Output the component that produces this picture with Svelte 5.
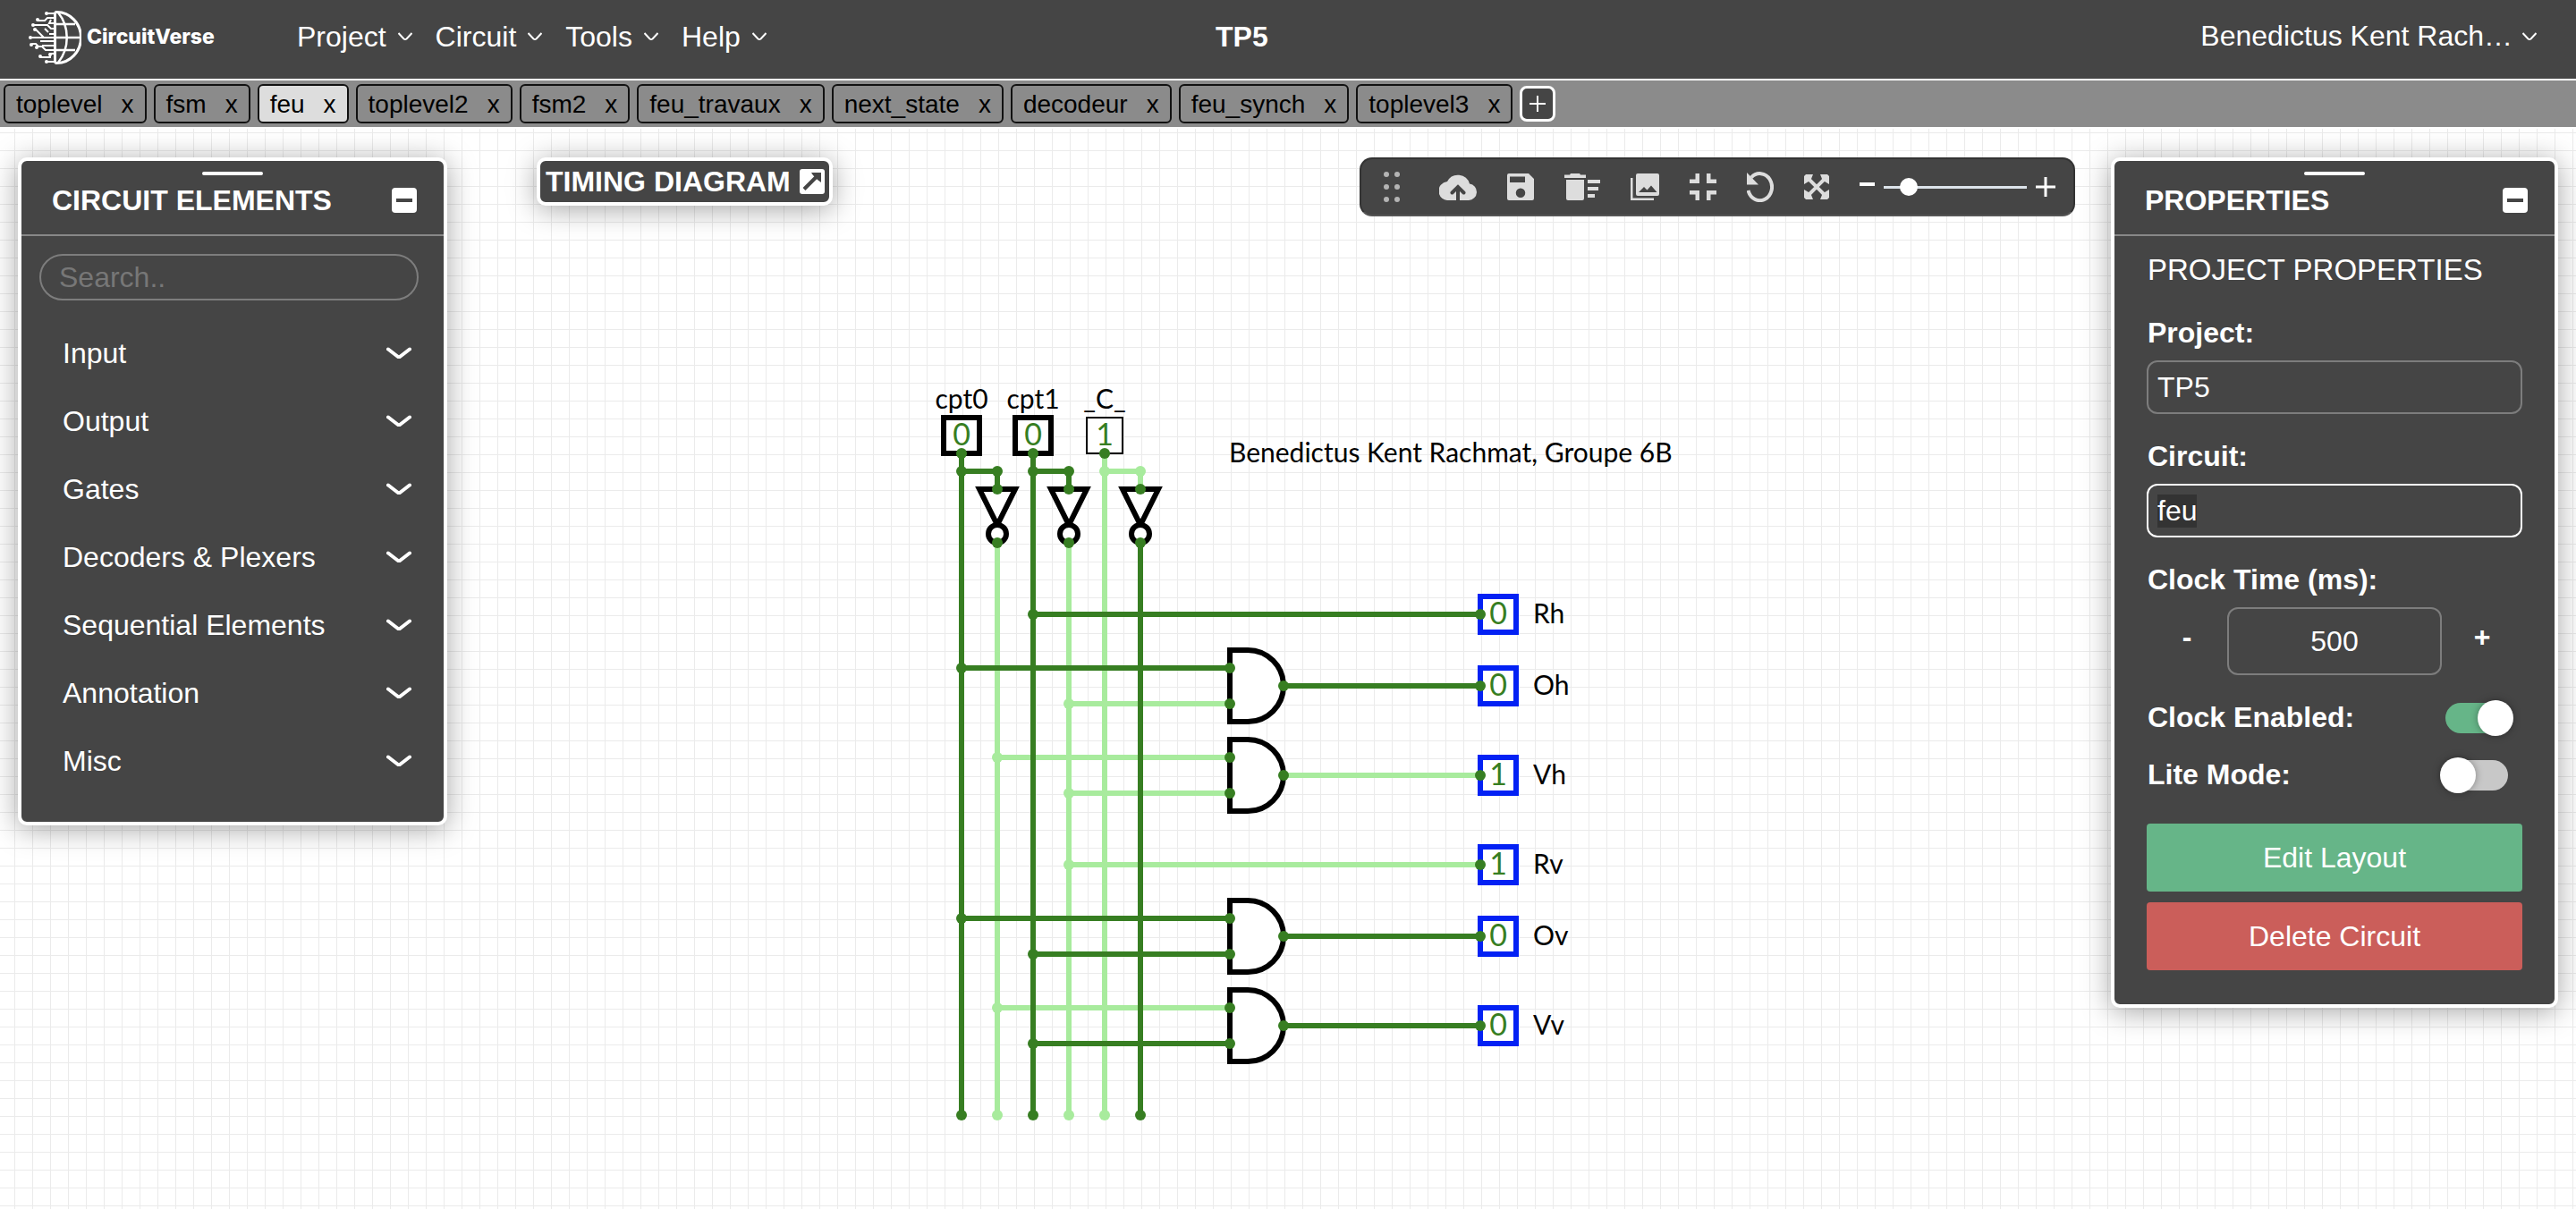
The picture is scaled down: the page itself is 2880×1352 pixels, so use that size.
<script>
  import { onMount } from 'svelte';

  const menus = ['Project', 'Circuit', 'Tools', 'Help'];
  const tabs = ['toplevel', 'fsm', 'feu', 'toplevel2', 'fsm2', 'feu_travaux', 'next_state', 'decodeur', 'feu_synch', 'toplevel3'];
  const groups = ['Input', 'Output', 'Gates', 'Decoders & Plexers', 'Sequential Elements', 'Annotation', 'Misc'];

  let activeTab = $state('feu');
  let project = $state('TP5');
  let circuit = $state('feu');
  let clockTime = $state(500);
  let clockEnabled = $state(true);
  let liteMode = $state(false);
  let zoom = $state(13);
  let circuitInput;

  onMount(() => {
    circuitInput.focus();
    circuitInput.select();
  });

  // Wires: [x1, y1, x2, y2, value]
  const wires = [
    [1235, 507, 1235, 1247, 1], [1235, 527, 1275, 527, 1], [1275, 527, 1275, 547, 1],
    [1115, 607, 1115, 1247, 1], [1195, 607, 1195, 1247, 1],
    [1195, 787, 1375, 787, 1], [1115, 847, 1375, 847, 1], [1195, 887, 1375, 887, 1],
    [1435, 867, 1655, 867, 1], [1195, 967, 1655, 967, 1], [1115, 1127, 1375, 1127, 1],
    [1075, 507, 1075, 1247, 0], [1075, 527, 1115, 527, 0], [1115, 527, 1115, 547, 0],
    [1155, 507, 1155, 1247, 0], [1155, 527, 1195, 527, 0], [1195, 527, 1195, 547, 0],
    [1275, 607, 1275, 1247, 0], [1155, 687, 1655, 687, 0], [1075, 747, 1375, 747, 0],
    [1435, 767, 1655, 767, 0], [1075, 1027, 1375, 1027, 0], [1155, 1067, 1375, 1067, 0],
    [1435, 1047, 1655, 1047, 0], [1155, 1167, 1375, 1167, 0], [1435, 1147, 1655, 1147, 0]
  ];
  const joints = [
    [1075, 527, 0], [1115, 527, 0], [1155, 527, 0], [1195, 527, 0], [1235, 527, 1], [1275, 527, 1],
    [1155, 687, 0], [1075, 747, 0], [1195, 787, 1], [1115, 847, 1], [1195, 887, 1], [1195, 967, 1],
    [1075, 1027, 0], [1155, 1067, 0], [1115, 1127, 1], [1155, 1167, 0],
    [1075, 1247, 0], [1115, 1247, 1], [1155, 1247, 0], [1195, 1247, 1], [1235, 1247, 1], [1275, 1247, 0]
  ];
  const inputs = [
    { x: 1075, label: 'cpt0', value: 0, bold: true },
    { x: 1155, label: 'cpt1', value: 0, bold: true },
    { x: 1235, label: '_C_', value: 1, bold: false }
  ];
  const inverters = [1115, 1195, 1275];
  const andGates = [767, 867, 1047, 1147];
  const outputs = [
    { y: 687, label: 'Rh', value: 0 }, { y: 767, label: 'Oh', value: 0 }, { y: 867, label: 'Vh', value: 1 },
    { y: 967, label: 'Rv', value: 1 }, { y: 1047, label: 'Ov', value: 0 }, { y: 1147, label: 'Vv', value: 0 }
  ];
</script>

{#snippet caret()}
  <svg class="caret" width="16" height="10" viewBox="0 0 16 10" aria-hidden="true"><path d="M0.5 1l6 6.5q1.5 1 3 0L15.500 1" /></svg>
{/snippet}

<div class="app">
  <header class="nav">
    <div class="nav-left">
      <a class="logo" href="#home" aria-label="CircuitVerse">
        <svg width="59" height="60" viewBox="0 0 59 60" aria-hidden="true">
          <g fill="none" stroke="#fff" stroke-width="3">
            <path d="M29.500 1.500v57M29.500 1.500h2a27 28.500 0 0 1 0 57h-2" />
            <path d="M33 2c13 16 13 40 0 56M30 15h22M30 30h28M30 44h22" stroke-width="2.500" />
            <path d="M29 3h-8M29 8h-8l-3 3h-8M29 14h-6l2-4M29 20h-4l-4-4H6M29 26h-6M29 30H2M29 34h-16M29 39h-14M29 44h-10l-4-4h-4l-3-3H4M29 48h-5v4H12M29 57h-8M17 30l-9-9M22 24l-4-4" stroke-width="2" />
          </g>
          <g fill="#fff">
            <circle cx="20" cy="3" r="2" /><circle cx="10" cy="10" r="2" /><circle cx="5" cy="16" r="2" /><circle cx="7" cy="21" r="2" />
            <circle cx="2" cy="30" r="2" /><circle cx="3" cy="38" r="2" /><circle cx="9" cy="41" r="2" /><circle cx="13" cy="51" r="2" /><circle cx="20" cy="57" r="2" /><circle cx="24" cy="49" r="2" />
          </g>
        </svg>
        <span>CircuitVerse</span>
      </a>
      <nav class="menus">
        {#each menus as menu}
          <button type="button">{menu}{@render caret()}</button>
        {/each}
      </nav>
    </div>
    <h1>TP5</h1>
    <button type="button" class="user"><span>Benedictus Kent Rach…</span>{@render caret()}</button>
  </header>

  <div class="tabs">
    {#each tabs as tab}
      <div class="tab" class:active={tab === activeTab}>
        <button type="button" onclick={() => (activeTab = tab)}>{tab}</button>
        <button type="button" aria-label="Close {tab}">x</button>
      </div>
    {/each}
    <button type="button" class="add" aria-label="New circuit">
      <svg width="18" height="18" viewBox="0 0 18 18"><path d="M9 0v18M0 9h18" stroke="#fff" stroke-width="2" /></svg>
    </button>
  </div>

  <main class="workspace">
    <svg class="circuit" width="860" height="850" viewBox="1040 420 860 850" role="img" aria-label="Circuit feu">
      {#each inputs as pin}
        <rect class="pin" class:thin={!pin.bold} x={pin.x - 20} y="467" width="40" height="40" />
        <text class="label mid" x={pin.x} y="457">{pin.label}</text>
        <text class="value" x={pin.x} y="498">{pin.value}</text>
      {/each}
      {#each outputs as out}
        <rect class="pin out" x="1655" y={out.y - 20} width="40" height="40" />
        <text class="value" x="1675" y={out.y + 11}>{out.value}</text>
        <text class="label" x="1714" y={out.y + 10}>{out.label}</text>
      {/each}
      {#each inverters as x}
        <path class="gate" d="M{x - 20} 547h40L{x} 587z" />
        <circle class="gate" cx={x} cy="597" r="10" />
      {/each}
      {#each andGates as y}
        <path class="gate" d="M1375 {y - 40}h20a40 40 0 0 1 0 80h-20z" />
      {/each}
      {#each wires as [x1, y1, x2, y2, v]}
        <line class="wire" class:high={v} {x1} {y1} {x2} {y2} />
      {/each}
      {#each joints as [cx, cy, v]}
        <circle class="joint" class:high={v} {cx} {cy} r="6" />
      {/each}
      {#each inputs as pin}<circle class="joint" cx={pin.x} cy="507" r="6" />{/each}
      {#each outputs as out}<circle class="joint" cx="1655" cy={out.y} r="6" />{/each}
      {#each inverters as x}
        <circle class="joint" cx={x} cy="547" r="6" /><circle class="joint" cx={x} cy="607" r="6" />
      {/each}
      {#each andGates as y}
        <circle class="joint" cx="1375" cy={y - 20} r="6" /><circle class="joint" cx="1375" cy={y + 20} r="6" /><circle class="joint" cx="1435" cy={y} r="6" />
      {/each}
      <text class="label" x="1374" y="517">Benedictus Kent Rachmat, Groupe 6B</text>
    </svg>

    <section class="panel elements">
      <div class="panel-head">
        <span class="grip"></span>
        <h2>CIRCUIT ELEMENTS</h2>
        <button type="button" class="mini" aria-label="Minimize circuit elements"></button>
      </div>
      <input class="search" type="text" placeholder="Search.." aria-label="Search circuit elements" />
      <div class="groups">
        {#each groups as group}
          <button type="button">
            {group}
            <svg width="28" height="14" viewBox="0 0 28 14" aria-hidden="true"><path d="M2 2.500l11 8.500M15 11l11-8.500" /></svg>
          </button>
        {/each}
      </div>
    </section>

    <section class="panel timing">
      <h2>TIMING DIAGRAM</h2>
      <button type="button" aria-label="Open timing diagram">
        <svg width="28" height="28" viewBox="0 0 28 28"><rect width="28" height="28" rx="3" fill="#fff" /><path d="M5 22.500L21 6.500" stroke="#454545" stroke-width="4" /><path d="M13 4h11v11l-4-3-5-5z" fill="#454545" /></svg>
      </button>
    </section>

    <div class="toolbar" role="toolbar" aria-label="Quick actions">
      <svg class="dots" width="18" height="34" viewBox="0 0 18 34" aria-hidden="true">
        <g fill="#b4b4b4">
          <circle cx="3" cy="3" r="3" /><circle cx="15" cy="3" r="3" /><circle cx="3" cy="17" r="3" /><circle cx="15" cy="17" r="3" /><circle cx="3" cy="31" r="3" /><circle cx="15" cy="31" r="3" />
        </g>
      </svg>
      <button type="button" aria-label="Save online">
        <svg width="42" height="30" viewBox="0 0 42 30"><path fill="#ddd" d="M11 30A10.500 10.500 0 0 1 9 9a13.500 13.500 0 0 1 25 2.500A9.300 9.300 0 0 1 33 30z" /><path d="M21 30V15M14.500 21.500l6.500-6.500 6.500 6.500" fill="none" stroke="#454545" stroke-width="4" stroke-linecap="round" /></svg>
      </button>
      <button type="button" aria-label="Save offline">
        <svg width="30" height="30" viewBox="0 0 30 30"><path fill="#ddd" fill-rule="evenodd" d="M2 0h22l6 6v22a2 2 0 0 1-2 2H2a2 2 0 0 1-2-2V2a2 2 0 0 1 2-2zM3 3.500v6.500h17V3.500zM15 16.500a5 5 0 1 0 0 10.500 5 5 0 0 0 0-10.500z" /></svg>
      </button>
      <button type="button" aria-label="Delete selected">
        <svg width="40" height="30" viewBox="0 0 40 30"><path fill="#ddd" d="M7 0h10l1 1.500h6V5H0V1.500h6zM2 7h20v21a2 2 0 0 1-2 2H4a2 2 0 0 1-2-2zM26 7h14v4H26zM26 15h12v4H26zM26 23h8v4h-8z" /></svg>
      </button>
      <button type="button" aria-label="Download as image">
        <svg width="32" height="30" viewBox="0 0 32 30"><path fill="#ddd" d="M0 5h2.500v22.500H26V30H0zM8 0h22a2 2 0 0 1 2 2v21a2 2 0 0 1-2 2H8a2 2 0 0 1-2-2V2a2 2 0 0 1 2-2z" /><path fill="#454545" d="M9 21l6-6 3.500 3.500 4.500-5 6.500 7.500z" /></svg>
      </button>
      <button type="button" aria-label="Fit to screen">
        <svg width="30" height="30" viewBox="0 0 30 30"><path fill="#ddd" d="M6.500 0H11v11H0V6.500h6.500zM19 0h4.500v6.500H30V11H19zM0 19h11v11H6.500v-6.500H0zM19 19h11v4.500h-6.500V30H19z" /></svg>
      </button>
      <button type="button" aria-label="Undo">
        <svg width="30" height="34" viewBox="0 0 30 34"><path fill="none" stroke="#ddd" stroke-width="4" d="M1.500 21A13.500 15 0 1 0 5 6.500" /><path fill="#ddd" d="M0 1v13.500h13z" /></svg>
      </button>
      <button type="button" aria-label="View preview">
        <svg width="28" height="28" viewBox="0 0 28 28"><path stroke="#ddd" stroke-width="4" d="M4 4l20 20M24 4L4 24" /><path fill="#ddd" d="M2 0h8L8 5 5 8l-5 3V2zM26 0h-8l2 5 3 3 5 3V2zM0 26v-9l5 3 3 3 2 5H2zM28 26v-9l-5 3-3 3-2 5h8z" /></svg>
      </button>
      <div class="zoom">
        <button type="button" aria-label="Zoom out"><svg width="17" height="22" viewBox="0 0 17 22"><path d="M0 8h17" stroke="#fff" stroke-width="4" /></svg></button>
        <input type="range" min="0" max="100" bind:value={zoom} aria-label="Zoom" />
        <button type="button" aria-label="Zoom in"><svg width="22" height="22" viewBox="0 0 22 22"><path d="M11 0v22M0 11h22" stroke="#fff" stroke-width="3" /></svg></button>
      </div>
    </div>

    <section class="panel properties">
      <div class="panel-head">
        <span class="grip"></span>
        <h2>PROPERTIES</h2>
        <button type="button" class="mini" aria-label="Minimize properties"></button>
      </div>
      <form class="fields" onsubmit={(e) => e.preventDefault()}>
        <h3>PROJECT PROPERTIES</h3>
        <label for="project">Project:</label>
        <input id="project" class="box" type="text" bind:value={project} />
        <label for="circuit">Circuit:</label>
        <input id="circuit" class="box" type="text" bind:value={circuit} bind:this={circuitInput} />
        <label for="clock">Clock Time (ms):</label>
        <div class="stepper">
          <button type="button" aria-label="Decrease clock time" onclick={() => (clockTime -= 10)}>-</button>
          <input id="clock" class="box" type="text" inputmode="numeric" bind:value={clockTime} />
          <button type="button" aria-label="Increase clock time" onclick={() => (clockTime += 10)}>+</button>
        </div>
        <div class="switch"><label for="enabled">Clock Enabled:</label><input id="enabled" type="checkbox" bind:checked={clockEnabled} /></div>
        <div class="switch"><label for="lite">Lite Mode:</label><input id="lite" type="checkbox" bind:checked={liteMode} /></div>
        <div class="actions">
          <button type="button" class="edit">Edit Layout</button>
          <button type="button" class="delete">Delete Circuit</button>
        </div>
      </form>
    </section>
  </main>
</div>

<style>
  :global(body) { background: #fff; }
  .app, .app * { box-sizing: border-box; }
  .app {
    min-height: 100vh;
    display: flex;
    flex-direction: column;
    font-family: "Liberation Sans", Arial, sans-serif;
    font-size: 32px;
    line-height: 36px;
    color: #fff;
  }
  h1, h2, h3 { margin: 0; font-size: 32px; line-height: 36px; }
  button { font: inherit; color: inherit; background: none; border: 0; padding: 0; cursor: pointer; }
  button svg { display: block; }
  input { font: inherit; color: inherit; margin: 0; outline: none; }
  input::selection { background: #333; color: #fff; }

  .nav {
    display: flex;
    align-items: center;
    height: 90px;
    padding: 0 44px 6px 32px;
    background: #454545;
    border-bottom: 2px solid #fff;
  }
  .nav-left { flex: 0 0 1327px; display: flex; align-items: center; }
  .logo { display: flex; align-items: center; gap: 6px; width: 300px; padding-top: 2px; color: #fff; text-decoration: none; font: 800 23px/28px Inter, sans-serif; }
  .logo span { padding-bottom: 2px; }
  .menus { display: flex; gap: 26px; }
  .menus button, .user { display: flex; align-items: center; gap: 13px; }
  .user { margin-left: auto; gap: 11px; }
  .user span { padding-bottom: 2px; }
  .caret path { fill: none; stroke: #fff; stroke-width: 2; }

  .tabs { display: flex; align-items: center; gap: 8px; height: 52px; padding: 0 4px; background: #8b8b8b; color: #000; font-size: 28px; line-height: 32px; }
  .tab { display: flex; gap: 21px; height: 44px; padding: 5px 12px 3px; border: 2px solid #111; border-radius: 6px; }
  .tab.active { background: #ddd; }
  .add { display: grid; place-items: center; width: 40px; height: 40px; background: #454545; border: 3px solid #fff; border-radius: 8px; }

  .workspace {
    position: relative;
    flex: 1;
    display: flex;
    align-items: flex-start;
    margin-top: 2px;
    padding: 32px 20px;
    background-image: linear-gradient(#ebebeb 1px, transparent 1px), linear-gradient(90deg, #ebebeb 1px, transparent 1px);
    background-size: 20px 20px;
    background-position: 0 4px, 16px 0;
  }
  .circuit { position: absolute; left: 1040px; top: 276px; }
  .pin { fill: #fff; stroke: #000; stroke-width: 6; }
  .pin.thin { stroke-width: 2; }
  .pin.out { stroke: #0321f4; }
  .gate { fill: #fff; stroke: #000; stroke-width: 6; }
  .wire { stroke: #377e22; stroke-width: 6; }
  .wire.high { stroke: #a8eb9d; }
  .joint { fill: #377e22; }
  .joint.high { fill: #a8eb9d; }
  .label { font: 30px Lato, sans-serif; fill: #000; }
  .mid { text-anchor: middle; }
  .value { font: 34px Lato, sans-serif; fill: #377e22; text-anchor: middle; }

  .panel { position: relative; background: #454545; border: 4px solid #fff; border-radius: 10px; box-shadow: 0 4px 32px rgba(0, 0, 0, 0.36); }
  .panel-head { display: flex; flex-wrap: wrap; align-items: center; justify-content: space-between; padding: 12px 30px 20px 34px; border-bottom: 2px solid #888; }
  .grip { flex: 0 0 68px; height: 4px; margin: 0 calc(50% - 36px) 10px calc(50% - 36px); border-radius: 2px; background: #fff; }
  .mini { display: grid; place-items: center; width: 28px; height: 28px; border-radius: 4px; background: #fff; }
  .mini::before { content: ""; width: 18px; height: 4px; background: #454545; }

  .elements { width: 480px; padding-bottom: 12px; }
  .search { display: block; width: 424px; height: 52px; margin: 20px 20px 0; padding: 0 20px; background: none; border: 2px solid #7d7d7d; border-radius: 26px; }
  .search::placeholder { color: #777; opacity: 1; }
  .groups { padding: 21px 36px 18px 46px; }
  .groups button { display: flex; width: 100%; height: 76px; align-items: center; justify-content: space-between; }
  .groups path { fill: none; stroke: #fff; stroke-width: 4; stroke-linecap: round; }

  .timing { display: flex; align-items: center; gap: 10px; height: 54px; margin-left: 100px; padding: 0 5px 0 6px; }

  .toolbar { display: flex; align-items: center; gap: 34px; width: 800px; height: 66px; margin-left: auto; padding: 0 20px 0 25px; background: #454545; border: 2px solid #333; border-bottom-color: #555; border-radius: 14px; position: relative; }
  .dots { margin-right: 10px; }
  .zoom { flex: 1; display: flex; align-items: center; justify-content: space-between; }
  .zoom input { appearance: none; width: 160px; height: 20px; background: linear-gradient(#dce3ea, #dce3ea) center / 100% 3px no-repeat; }
  .zoom input::-webkit-slider-thumb { appearance: none; width: 20px; height: 20px; border-radius: 50%; background: #fff; }

  .properties { width: 500px; margin-left: 40px; }
  .fields { display: flex; flex-direction: column; padding: 19px 36px 38px; }
  .fields h3 { padding: 0 1px; font-size: 33px; line-height: 38px; font-weight: 400; margin-bottom: 33px; }
  .fields label { padding: 0 1px; font-weight: 700; }
  .fields > label { margin-bottom: 13px; }
  .box { width: 100%; height: 60px; margin-bottom: 29px; padding: 0 10px; background: none; border: 2px solid #7d7d7d; border-radius: 12px; }
  .box:focus { border-color: #fff; }
  .stepper { display: grid; grid-template-columns: 1fr 240px 1fr; align-items: center; font-weight: 700; margin-bottom: 16px; }
  .stepper .box { height: 76px; margin: 0; text-align: center; font-weight: 400; }
  .stepper button { padding-bottom: 10px; }
  .switch { display: flex; justify-content: space-between; align-items: center; height: 64px; padding-right: 16px; }
  .switch label { padding-bottom: 2px; }
  .switch input { appearance: none; position: relative; width: 70px; height: 34px; margin: 0; border-radius: 17px; background: #c8c8c8; }
  .switch input::before { content: ""; position: absolute; left: -6px; top: -3px; width: 40px; height: 40px; border-radius: 50%; background: #fff; box-shadow: 0 0 8px rgba(0, 0, 0, 0.35); }
  .switch input:checked { background: #66b588; }
  .switch input:checked::before { left: 36px; }
  .actions { display: grid; gap: 12px; padding-top: 22px; }
  .actions button { height: 76px; border-radius: 4px; }
  .edit { background: #66b588; }
  .delete { background: #cb5e5a; }
</style>
